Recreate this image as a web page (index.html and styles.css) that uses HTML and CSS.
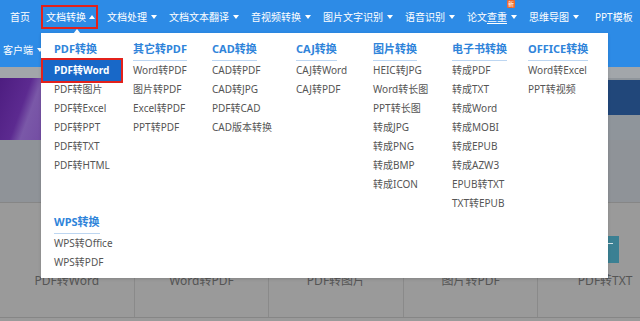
FILE: index.html
```html
<html>
<head>
  <meta charset="utf-8">
  <title>文档转换</title>
  <link rel="stylesheet" href="styles.css">
</head>
<body>

<div id="page">

  <div class="topbar">
    <span class="nav-item home">首页</span>
    <span class="nav-item active">文档转换<i class="caret up"></i></span>
    <span class="nav-item">文档处理<i class="caret"></i></span>
    <span class="nav-item">文档文本翻译<i class="caret"></i></span>
    <span class="nav-item">音视频转换<i class="caret"></i></span>
    <span class="nav-item">图片文字识别<i class="caret"></i></span>
    <span class="nav-item">语音识别<i class="caret"></i></span>
    <span class="nav-item has-badge">论文<u>查重</u><i class="caret"></i><b class="badge">新</b></span>
    <span class="nav-item">思维导图<i class="caret"></i></span>
    <span class="nav-item ppt">PPT模板</span>
  </div>

  <div class="subbar">
    <span class="nav-item">客户端<i class="caret"></i></span>
  </div>

  <div class="strip"></div>
  <div class="banner"></div>
  <div class="spacer"></div>

  <div class="cards">
    <div class="card"><div class="card-icon"></div><div class="card-label">PDF转Word</div></div>
    <div class="card"><div class="card-icon"></div><div class="card-label">Word转PDF</div></div>
    <div class="card"><div class="card-icon"></div><div class="card-label">PDF转图片</div></div>
    <div class="card"><div class="card-icon"></div><div class="card-label">图片转PDF</div></div>
    <div class="card"><div class="card-icon"><i></i></div><div class="card-label">PDF转TXT</div></div>
  </div>

  <!-- dropdown of 文档转换 -->
  <div class="menu">
    <div class="menu-grid">
      <div class="group">
        <h3>PDF转换</h3>
        <ul>
          <li class="current">PDF转Word</li>
          <li>PDF转图片</li>
          <li>PDF转Excel</li>
          <li>PDF转PPT</li>
          <li>PDF转TXT</li>
          <li>PDF转HTML</li>
        </ul>
      </div>
      <div class="group">
        <h3>其它转PDF</h3>
        <ul>
          <li>Word转PDF</li>
          <li>图片转PDF</li>
          <li>Excel转PDF</li>
          <li>PPT转PDF</li>
        </ul>
      </div>
      <div class="group">
        <h3>CAD转换</h3>
        <ul>
          <li>CAD转PDF</li>
          <li>CAD转JPG</li>
          <li>PDF转CAD</li>
          <li>CAD版本转换</li>
        </ul>
      </div>
      <div class="group">
        <h3>CAJ转换</h3>
        <ul>
          <li>CAJ转Word</li>
          <li>CAJ转PDF</li>
        </ul>
      </div>
      <div class="group">
        <h3>图片转换</h3>
        <ul>
          <li>HEIC转JPG</li>
          <li>Word转长图</li>
          <li>PPT转长图</li>
          <li>转成JPG</li>
          <li>转成PNG</li>
          <li>转成BMP</li>
          <li>转成ICON</li>
        </ul>
      </div>
      <div class="group">
        <h3>电子书转换</h3>
        <ul>
          <li>转成PDF</li>
          <li>转成TXT</li>
          <li>转成Word</li>
          <li>转成MOBI</li>
          <li>转成EPUB</li>
          <li>转成AZW3</li>
          <li>EPUB转TXT</li>
          <li>TXT转EPUB</li>
        </ul>
      </div>
      <div class="group">
        <h3>OFFICE转换</h3>
        <ul>
          <li>Word转Excel</li>
          <li>PPT转视频</li>
        </ul>
      </div>

      <div class="group row2">
        <h3>WPS转换</h3>
        <ul>
          <li>WPS转Office</li>
          <li>WPS转PDF</li>
        </ul>
      </div>
    </div>
  </div>

</div>

</body>
</html>
```

FILE: styles.css
```css
body {
  margin: 0;
  background: #9a9a9a;
  font-family: "Noto Sans", "Noto Sans CJK SC", sans-serif;
  overflow: hidden;
}
ul {
  list-style: none;
  margin: 0;
  padding: 0;
}
h3 {
  margin: 0;
}

#page {
  position: relative;
  width: 640px;
  height: 321px;
  overflow: hidden;
}

/* top navigation */
.topbar {
  display: flex;
  align-items: center;
  gap: 12px;
  height: 33px;
  padding-left: 10px;
  background: #2d8be6;
}
.subbar {
  display: flex;
  align-items: center;
  height: 34px;
  padding-left: 3px;
  background: #2d8be6;
}
.nav-item {
  position: relative;
  display: flex;
  align-items: center;
  color: #fff;
  font-size: 10px;
  line-height: 12px;
  white-space: nowrap;
}
.nav-item u {
  text-decoration: underline;
  text-underline-offset: 2px;
}
.home {
  margin-right: 4px;
}
.ppt {
  margin-left: 4px;
}
.caret {
  display: inline-block;
  margin-left: 4px;
  border-left: 3.5px solid transparent;
  border-right: 3.5px solid transparent;
  border-top: 4px solid #fff;
}
.caret.up {
  margin-left: 3px;
  border-top: 0;
  border-bottom: 4px solid #fff;
}
.active {
  border: 2px solid #e3211b;
  padding: 4px 1px 4px 3px;
  margin: 0 -3px 0 -5px;
}
.active:after {
  content: "";
  position: absolute;
  left: 30px;
  bottom: -7px;
  border-left: 4px solid transparent;
  border-right: 4px solid transparent;
  border-bottom: 5px solid #fff;
}
.badge {
  position: absolute;
  right: 2px;
  top: -11px;
  width: 8px;
  height: 8px;
  background: #ef6a2c;
  color: #fff;
  font-size: 6px;
  line-height: 8px;
  font-weight: normal;
  text-align: center;
  border-radius: 1px;
}

/* page behind the overlay */
.strip {
  height: 11px;
  background: #a2a6aa;
}
.banner {
  height: 62px;
  background:
    linear-gradient(#21477a, #21477a) right 2px / 45% 35px no-repeat,
    linear-gradient(110deg, #4d1d80 0, #5c2a90 30px, #7a58a8 40px, #6a3d9c 90px) left top / 55% 100% no-repeat,
    #8f959b;
}
.spacer {
  height: 62px;
  background: #8f9398;
}
.cards {
  display: flex;
  width: 673px;
  height: 114px;
  border-top: 1px solid #868686;
  border-bottom: 1px solid #868686;
}
.card {
  flex: 0 0 134.6px;
  box-sizing: border-box;
  display: flex;
  flex-direction: column;
  align-items: center;
  padding-top: 33px;
  border-right: 1px solid #8a8a8a;
}
.card-icon {
  position: relative;
  width: 28px;
  height: 27px;
  margin-bottom: 10px;
  background: #3b8093;
}
.card-icon i {
  position: absolute;
  left: 17px;
  top: 7px;
  width: 5px;
  height: 1px;
  background: #d8e6ea;
}
.card-label {
  color: #555;
  font-size: 12px;
  line-height: 16px;
}

/* dropdown panel */
.menu {
  position: absolute;
  top: 33px;
  left: 41px;
  width: 567px;
  height: 245px;
  box-sizing: border-box;
  padding: 6px 0 0 13px;
  background: #fff;
  box-shadow: 0 1px 3px rgba(0, 0, 0, 0.15);
}
.menu-grid {
  display: grid;
  grid-template-columns: 79px 79px 84px 77px 79px 76px 1fr;
}
.group h3 {
  display: inline-block;
  color: #2f84da;
  font-size: 11px;
  font-weight: bold;
  line-height: 20px;
  padding-bottom: 1px;
  border-bottom: 1px solid #bdd6f1;
}
.group li {
  color: #555;
  font-size: 10px;
  line-height: 19px;
  white-space: nowrap;
}
.group li.current {
  box-sizing: border-box;
  width: 82px;
  margin: -3px 0 -3px -13px;
  padding: 1px 0 1px 11px;
  border: 2px solid #e3211b;
  background: #1868c8;
  color: #fff;
  font-weight: bold;
  position: relative;
}
.row2 {
  grid-column: 1 / 3;
  margin-top: -1px;
}
```
